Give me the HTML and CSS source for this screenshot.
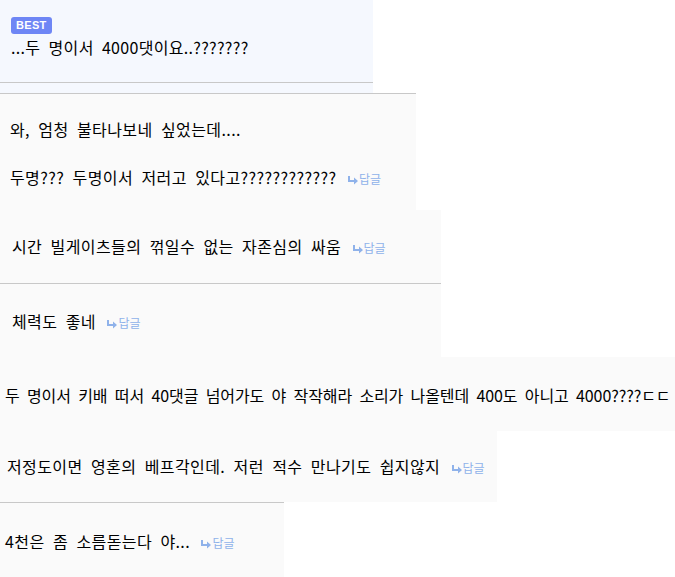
FILE: index.html
```html
<!DOCTYPE html>
<html lang="ko">
<head>
<meta charset="utf-8">
<link rel="stylesheet" href="styles.css">
</head>
<body>
<div class="best-wrap">
  <div class="best">
    <span class="badge">BEST</span>
    <div class="best-text">...두 명이서 4000댓이요..???????</div>
  </div>
</div>
<div class="cmt c2">
  <div class="line">와, 엄청 불타나보네 싶었는데....</div>
  <div class="line">&nbsp;</div>
  <div class="line">두명??? 두명이서 저러고 있다고???????????? <span class="reply"><svg class="arrow" viewBox="0 0 10 9" width="10" height="9"><path d="M0 0H2V4H6V1.5L10 5L6 8.5V6H0Z"/></svg>답글</span></div>
</div>
<div class="cmt c3">
  <div class="line">시간 빌게이츠들의 꺾일수 없는 자존심의 싸움 <span class="reply"><svg class="arrow" viewBox="0 0 10 9" width="10" height="9"><path d="M0 0H2V4H6V1.5L10 5L6 8.5V6H0Z"/></svg>답글</span></div>
</div>
<div class="cmt c4">
  <div class="line">체력도 좋네 <span class="reply"><svg class="arrow" viewBox="0 0 10 9" width="10" height="9"><path d="M0 0H2V4H6V1.5L10 5L6 8.5V6H0Z"/></svg>답글</span></div>
</div>
<div class="cmt c5">
  <div class="line line-tight">두 명이서 키배 떠서 40댓글 넘어가도 야 작작해라 소리가 나올텐데 400도 아니고 4000????ㄷㄷ</div>
</div>
<div class="cmt c6">
  <div class="line">저정도이면 영혼의 베프각인데. 저런 적수 만나기도 쉽지않지 <span class="reply"><svg class="arrow" viewBox="0 0 10 9" width="10" height="9"><path d="M0 0H2V4H6V1.5L10 5L6 8.5V6H0Z"/></svg>답글</span></div>
</div>
<div class="cmt c7">
  <div class="line">4천은 좀 소름돋는다 야... <span class="reply"><svg class="arrow" viewBox="0 0 10 9" width="10" height="9"><path d="M0 0H2V4H6V1.5L10 5L6 8.5V6H0Z"/></svg>답글</span></div>
</div>
</body>
</html>
```

FILE: styles.css
```css
html, body {
  margin: 0;
  padding: 0;
  overflow: hidden;
  background: #ffffff;
}
body {
  font-family: "Noto Sans CJK KR", "Noto Sans", sans-serif;
  font-size: 16px;
  color: #000000;
}
.best-wrap {
  width: 373px;
  background: #f5f8fe;
  padding-bottom: 10px;
}
.best {
  padding: 17px 0 23px 11px;
  border-bottom: 1px solid #c8c8c8;
}
.badge {
  display: block;
  width: fit-content;
  height: 17px;
  line-height: 17px;
  padding: 0 5px;
  background: #6e86f5;
  color: #ffffff;
  font-family: "Liberation Sans", "Noto Sans", sans-serif;
  font-weight: bold;
  font-size: 11px;
  letter-spacing: 0.3px;
  border-radius: 3px;
}
.best-text {
  margin-top: 1px;
  line-height: 24px;
  white-space: nowrap;
  letter-spacing: 0.3px;
  word-spacing: 3.5px;
}
.cmt {
  background: #fafafa;
  white-space: nowrap;
  overflow: hidden;
}
.line {
  height: 24px;
  line-height: 24px;
  letter-spacing: 0.4px;
  word-spacing: 3.5px;
}
.line-tight {
  letter-spacing: -0.1px;
  word-spacing: 3px;
}
.c2 {
  width: 406px;
  border-top: 1px solid #c8c8c8;
  padding: 23px 0 21px 10px;
}
.c3 {
  width: 429px;
  padding: 24px 0 25px 12px;
}
.c4 {
  width: 429px;
  border-top: 1px solid #c8c8c8;
  padding: 25px 0 24px 12px;
}
.c5 {
  width: 670px;
  padding: 26px 0 24px 5px;
}
.c6 {
  width: 490px;
  padding: 23px 0 24px 7px;
}
.c7 {
  width: 279px;
  border-top: 1px solid #c8c8c8;
  padding: 26px 0 24px 5px;
}
.reply {
  margin-left: 3px;
  font-size: 12px;
  line-height: 1;
  letter-spacing: 0;
  word-spacing: normal;
  color: #8fb2ea;
}
.arrow {
  fill: #8fb2ea;
  vertical-align: -1px;
  margin-right: 1px;
}
```
